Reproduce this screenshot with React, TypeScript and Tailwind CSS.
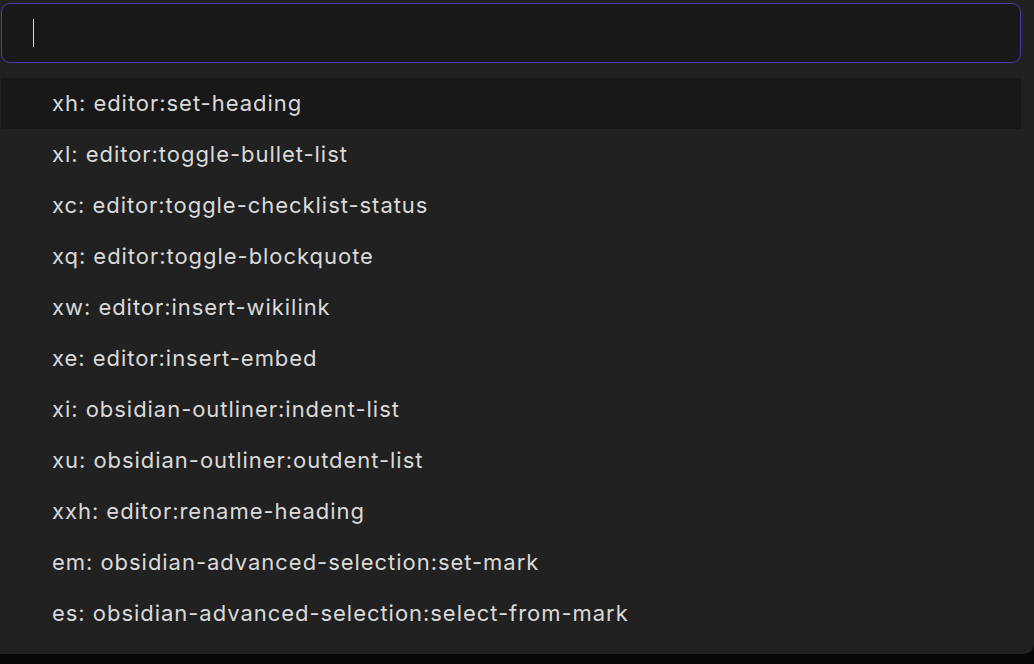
const commands = [
  "xh: editor:set-heading",
  "xl: editor:toggle-bullet-list",
  "xc: editor:toggle-checklist-status",
  "xq: editor:toggle-blockquote",
  "xw: editor:insert-wikilink",
  "xe: editor:insert-embed",
  "xi: obsidian-outliner:indent-list",
  "xu: obsidian-outliner:outdent-list",
  "xxh: editor:rename-heading",
  "em: obsidian-advanced-selection:set-mark",
  "es: obsidian-advanced-selection:select-from-mark",
];

export default function App() {
  return (
    <div className="h-[664px] w-[1034px] bg-[#070707] font-['Inter',sans-serif]">
      <div className="h-[654px] bg-[#212121] rounded-br-[10px] pl-px pr-[13px] pt-[3px]">
        <div className="h-[60px] rounded-[9px] border border-[#4b3aa8] bg-[#181818] flex items-center pl-[31px]">
          <div className="w-px h-[28px] bg-[#dcdcdc]" />
        </div>
        <div className="mt-[15px] flex flex-col">
          {commands.map((c, i) => (
            <div
              key={c}
              className={
                "h-[51px] flex items-center pl-[51px] text-[22px] tracking-[0.96px] text-[#dadada] " +
                (i === 0 ? "bg-[#181818]" : "")
              }
            >
              {c}
            </div>
          ))}
        </div>
      </div>
    </div>
  );
}
